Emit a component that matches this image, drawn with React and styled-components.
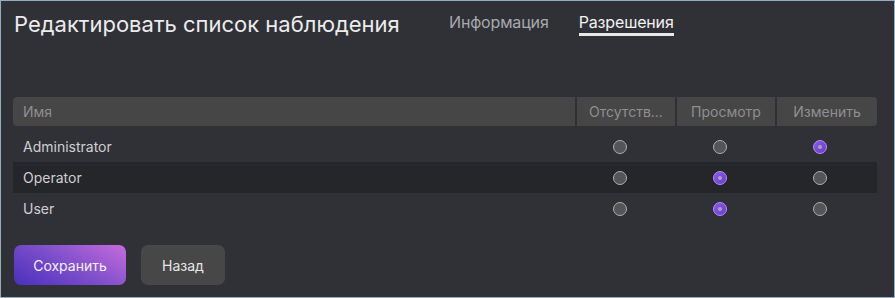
import React from "react";
import styled, { createGlobalStyle } from "styled-components";

const Global = createGlobalStyle`
  html, body { margin: 0; padding: 0; background: #2f3137; }
  body { font-family: Inter, "Noto Sans", sans-serif; }
  * { box-sizing: border-box; }
`;

const Frame = styled.div`
  width: 895px;
  height: 298px;
  border: 1px solid #93aebd;
  background: #2f3137;
  padding: 0 17px 0 12px;
  display: flex;
  flex-direction: column;
`;

const TopBar = styled.div`
  height: 96px;
  padding-top: 10px;
  display: flex;
  align-items: flex-start;
`;

const Title = styled.h1`
  flex: 0 0 436px;
  margin: 0;
  padding-left: 1px;
  font-size: 22px;
  line-height: 27px;
  font-weight: 400;
  color: #ececec;
`;

const Tabs = styled.div`
  display: flex;
  gap: 30px;
  margin-top: 1px;
`;

const Tab = styled.div`
  font-size: 16px;
  line-height: 20px;
  padding-bottom: 1px;
  letter-spacing: -0.15px;
  color: ${(p) => (p.$active ? "#f2f2f2" : "#a9a9ab")};
  border-bottom: 3px solid ${(p) => (p.$active ? "#e8e8e8" : "transparent")};
`;

const Grid = styled.div`
  display: grid;
  grid-template-columns: 562px 98px 98px 100px;
  column-gap: 2px;
  width: 864px;
`;

const Head = styled(Grid)`
  height: 29px;
  margin-bottom: 5px;
`;

const HeadCell = styled.div`
  background: #464646;
  color: #8f8f91;
  font-size: 14px;
  display: flex;
  align-items: center;
  justify-content: ${(p) => (p.$left ? "flex-start" : "center")};
  padding: ${(p) => (p.$left ? "0 10px" : "0 6px")};
  border-radius: ${(p) => p.$radius || "0"};
  white-space: nowrap;
`;

const Row = styled(Grid)`
  height: 31px;
  background: ${(p) => (p.$dark ? "#252629" : "transparent")};
`;

const NameCell = styled.div`
  display: flex;
  align-items: center;
  padding-left: 10px;
  font-size: 14px;
  color: #cfcfd1;
`;

const RadioCell = styled.div`
  display: flex;
  align-items: center;
  padding-left: 36px;
`;

const Radio = styled.span`
  width: 14px;
  height: 14px;
  border-radius: 50%;
  display: flex;
  align-items: center;
  justify-content: center;
  border: 1.5px solid ${(p) => (p.$on ? "#b690f2" : "#aeaeae")};
  background: ${(p) =>
    p.$on ? "linear-gradient(135deg, #8a5ae8, #6a3bd4)" : "#555557"};
  &::after {
    content: "";
    display: ${(p) => (p.$on ? "block" : "none")};
    width: 4px;
    height: 4px;
    border-radius: 50%;
    background: #a8a3b8;
  }
`;

const Actions = styled.div`
  display: flex;
  gap: 15px;
  margin-top: 21px;
  padding-left: 1px;
`;

const Button = styled.button`
  height: 40px;
  width: ${(p) => p.$w}px;
  border: none;
  border-radius: 7px;
  font-family: Inter, "Noto Sans", sans-serif;
  font-size: 14px;
  color: ${(p) => (p.$primary ? "#f4f0ff" : "#e6e6e6")};
  background: ${(p) =>
    p.$primary
      ? "linear-gradient(30deg, #4a2fbc 0%, #7e4fcb 50%, #c66cdb 100%)"
      : "#474748"};
  padding: 0;
`;

const users = [
  { name: "Administrator", value: 2 },
  { name: "Operator", value: 1 },
  { name: "User", value: 1 },
];

export default function App() {
  return (
    <>
      <Global />
      <Frame>
        <TopBar>
          <Title>Редактировать список наблюдения</Title>
          <Tabs>
            <Tab>Информация</Tab>
            <Tab $active>Разрешения</Tab>
          </Tabs>
        </TopBar>
        <Head>
          <HeadCell $left $radius="4px 0 0 4px">Имя</HeadCell>
          <HeadCell>Отсутств...</HeadCell>
          <HeadCell>Просмотр</HeadCell>
          <HeadCell $radius="0 4px 4px 0">Изменить</HeadCell>
        </Head>
        {users.map((u, i) => (
          <Row key={u.name} $dark={i === 1}>
            <NameCell>{u.name}</NameCell>
            {[0, 1, 2].map((c) => (
              <RadioCell key={c}>
                <Radio $on={u.value === c} />
              </RadioCell>
            ))}
          </Row>
        ))}
        <Actions>
          <Button $primary $w={112}>Сохранить</Button>
          <Button $w={84}>Назад</Button>
        </Actions>
      </Frame>
    </>
  );
}
